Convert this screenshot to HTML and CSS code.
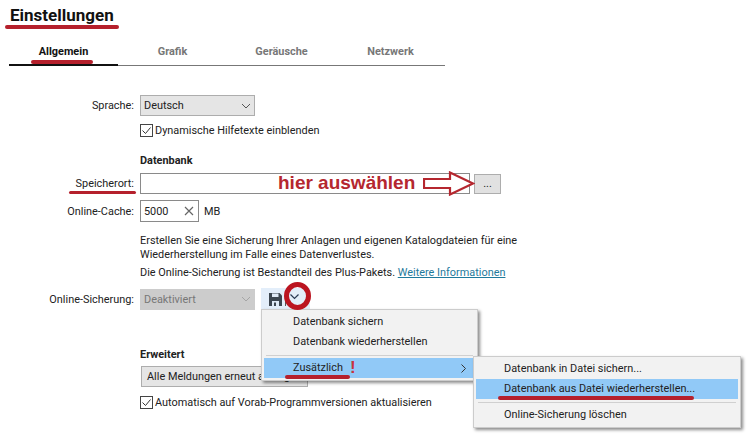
FILE: index.html
```html
<!DOCTYPE html>
<html>
<head>
  <meta charset="UTF-8">
  <title>Einstellungen</title>
  <link rel="stylesheet" href="styles.css">
</head>
<body>
  <div class="page">
    <h1 class="title">Einstellungen</h1>
    <div class="tabs">
      <div class="tab active">Allgemein</div>
      <div class="tab">Grafik</div>
      <div class="tab">Geräusche</div>
      <div class="tab">Netzwerk</div>
    </div>

    <div class="form">
      <div class="row row-lang">
        <div class="label">Sprache:</div>
        <div class="select">Deutsch
          <svg class="chev" width="10" height="6" viewBox="0 0 10 6"><path d="M1 1l4 4 4-4" fill="none" stroke="#555" stroke-width="1"/></svg>
        </div>
      </div>
      <div class="row row-check">
        <div class="label"></div>
        <label class="check">
          <svg width="13" height="13" viewBox="0 0 13 13"><rect x="0.5" y="0.5" width="12" height="12" fill="#fff" stroke="#444"/><path d="M2.5 6.5l3 3 5-6" fill="none" stroke="#333"/></svg>
          Dynamische Hilfetexte einblenden
        </label>
      </div>

      <div class="row row-head">
        <div class="label"></div>
        <div class="head">Datenbank</div>
      </div>
      <div class="row row-path">
        <div class="label">Speicherort:</div>
        <div class="input input-path"></div>
        <div class="browse">...</div>
      </div>
      <div class="row row-cache">
        <div class="label">Online-Cache:</div>
        <div class="input input-cache">5000
          <svg width="10" height="10" viewBox="0 0 10 10"><path d="M1 1l8 8M9 1l-8 8" stroke="#666" stroke-width="1.2"/></svg>
        </div>
        <div class="unit">MB</div>
      </div>

      <div class="row row-info">
        <div class="label"></div>
        <div class="info">
          <p>Erstellen Sie eine Sicherung Ihrer Anlagen und eigenen Katalogdateien für eine<br>Wiederherstellung im Falle eines Datenverlustes.</p>
          <p class="info-plus">Die Online-Sicherung ist Bestandteil des Plus-Pakets. <a href="#">Weitere Informationen</a></p>
        </div>
      </div>

      <div class="row row-backup">
        <div class="label">Online-Sicherung:</div>
        <div class="select disabled">Deaktiviert
          <svg class="chev" width="10" height="6" viewBox="0 0 10 6"><path d="M1 1l4 4 4-4" fill="none" stroke="#a5a5a5" stroke-width="1"/></svg>
        </div>
        <div class="split">
          <svg width="13" height="13" viewBox="0 0 13 13"><path d="M0 0h10.5l2.5 2.5V13H0z" fill="#3c4650"/><rect x="3" y="0.5" width="6.5" height="3.5" fill="#dfeaf6"/><rect x="3" y="8" width="7" height="5" fill="#dfeaf6"/><rect x="5" y="9.5" width="2" height="3.5" fill="#3c4650"/></svg>
          <span class="split-bar"></span>
          <svg class="split-chev" width="9" height="6" viewBox="0 0 9 6"><path d="M0.5 0.5l4 4 4-4" fill="none" stroke="#2a3a55" stroke-width="1.2"/></svg>
        </div>
      </div>

      <div class="row row-head-adv">
        <div class="label"></div>
        <div class="head">Erweitert</div>
      </div>
      <div class="row row-msg">
        <div class="label"></div>
        <div class="select select-msg">Alle Meldungen erneut anzeigen</div>
      </div>
      <div class="row row-check2">
        <div class="label"></div>
        <label class="check">
          <svg width="13" height="13" viewBox="0 0 13 13"><rect x="0.5" y="0.5" width="12" height="12" fill="#fff" stroke="#444"/><path d="M2.5 6.5l3 3 5-6" fill="none" stroke="#333"/></svg>
          Automatisch auf Vorab-Programmversionen aktualisieren
        </label>
      </div>
    </div>
  </div>

  <!-- Kontextmenüs -->
  <div class="menu menu-main">
    <div class="item">Datenbank sichern</div>
    <div class="item">Datenbank wiederherstellen</div>
    <div class="sep"></div>
    <div class="item hot">Zusätzlich
      <svg class="sub-arrow" width="5" height="9" viewBox="0 0 5 9"><path d="M0.5 0.5l4 4-4 4" fill="none" stroke="#333"/></svg>
    </div>
  </div>
  <div class="menu menu-sub">
    <div class="item">Datenbank in Datei sichern...</div>
    <div class="item hot">Datenbank aus Datei wiederherstellen...</div>
    <div class="sep"></div>
    <div class="item">Online-Sicherung löschen</div>
  </div>

  <!-- rote Markierungen -->
  <div class="mark mark-title"></div>
  <div class="mark mark-tab"></div>
  <div class="mark mark-path"></div>
  <div class="mark mark-extra"></div>
  <div class="mark mark-restore"></div>
  <div class="hint">hier auswählen</div>
  <svg class="hint-arrow" width="52" height="25" viewBox="0 0 52 25"><path d="M1 8h26V1.5L50 12.5 27 23.5V17H1z" fill="#fff" stroke="#b5272f" stroke-width="2.2"/></svg>
  <div class="bang">!</div>
  <div class="ring"></div>
</body>
</html>
```

FILE: styles.css
```css
html, body {
  margin: 0;
  height: 100%;
}
body {
  background: #fff;
  color: #222;
  font-family: Roboto, "Noto Sans", sans-serif;
  font-size: 10.9px;
  overflow: hidden;
  position: relative;
}
.page {
  padding: 3px 305px 0 9px;
}
.title {
  margin: 0;
  font-size: 17px;
  line-height: 24px;
  font-weight: 700;
  color: #111;
  padding-left: 1px;
}
.tabs {
  display: flex;
  margin-top: 15px;
  border-bottom: 1px solid #777;
  height: 23px;
}
.tab {
  width: 109px;
  text-align: center;
  font-weight: 700;
  line-height: 20px;
  color: #777;
}
.tab.active {
  color: #111;
  border-bottom: 2px solid #111;
  height: 22px;
}

.row {
  display: flex;
  align-items: center;
  gap: 6px;
}
.label {
  width: 125px;
  flex: none;
  text-align: right;
  white-space: nowrap;
}
.row-lang { margin-top: 29px; }
.row-check { margin-top: 8px; }
.row-head { margin-top: 16px; }
.row-path { margin-top: 5px; }
.row-cache { margin-top: 6px; }
.row-info { margin-top: 12px; align-items: flex-start; }
.row-backup { margin-top: 8px; }
.row-head-adv { margin-top: 37px; }
.row-msg { margin-top: 4px; }
.row-check2 { margin-top: 9px; }

.select {
  width: 115px;
  height: 21px;
  flex: none;
  box-sizing: border-box;
  border: 1px solid #adadad;
  background: #e5e5e5;
  display: flex;
  align-items: center;
  justify-content: space-between;
  padding: 0 3px 0 3px;
  color: #222;
}
.select.disabled {
  background: #ccc;
  border-color: #ccc;
  color: #777;
}
.select-msg {
  width: 167px;
  margin-left: 1px;
  white-space: nowrap;
  padding-left: 5px;
}
.check {
  display: flex;
  align-items: center;
  gap: 2px;
  white-space: nowrap;
  height: 13px;
}
.head {
  font-weight: 700;
  color: #222;
  line-height: 15px;
}
.input {
  box-sizing: border-box;
  border: 1px solid #8a8a8a;
  background: #fff;
  height: 21px;
  flex: none;
}
.input-path {
  width: 330px;
}
.browse {
  width: 27px;
  height: 20px;
  flex: none;
  margin-left: -2px;
  box-sizing: border-box;
  border: 1px solid #adadad;
  background: #e1e1e1;
  text-align: center;
  line-height: 18px;
}
.input-cache {
  width: 59px;
  height: 22px;
  display: flex;
  align-items: center;
  justify-content: space-between;
  padding: 0 4px 0 3px;
}
.unit {
  margin-left: -1px;
}
.info p {
  margin: 0;
  line-height: 14px;
  white-space: nowrap;
}
.info .info-plus {
  margin-top: 4px;
}
.info a {
  color: #1f7a9c;
}
.split {
  width: 49px;
  height: 22px;
  flex: none;
  background: #e3eefa;
  display: flex;
  align-items: center;
  gap: 3px;
  padding-left: 8px;
  box-sizing: border-box;
}
.split-bar {
  width: 1px;
  height: 14px;
  background: #555;
}
.split-chev {
  margin-left: 1px;
  margin-bottom: 4px;
}

.menu {
  position: absolute;
  background: #f2f2f2;
  border: 1px solid #ccc;
  box-shadow: 2px 2px 3px rgba(0, 0, 0, 0.45);
  box-sizing: border-box;
  padding: 2px 2px 1px;
}
.menu-main {
  left: 261px;
  top: 309px;
  width: 217px;
  height: 72px;
}
.menu-sub {
  left: 473px;
  top: 356px;
  width: 268px;
  height: 72px;
}
.menu-sub .item {
  padding-left: 28px;
}
.item {
  height: 20px;
  line-height: 20px;
  padding-left: 29px;
  position: relative;
}
.item.hot {
  background: #91c9f7;
}
.sep {
  height: 1px;
  margin: 3px 2px 2px;
  background: #d0d0d0;
}
.sub-arrow {
  position: absolute;
  right: 9px;
  top: 6px;
}

.mark {
  position: absolute;
  height: 4px;
  background: #b5202c;
  border-radius: 2px;
}
.mark-title { left: 5px; top: 25px; width: 114px; }
.mark-tab { left: 31px; top: 60px; width: 62px; }
.mark-path { left: 69px; top: 191px; width: 67px; height: 3px; }
.mark-extra { left: 285px; top: 375px; width: 65px; }
.mark-restore { left: 498px; top: 396px; width: 196px; }
.hint {
  position: absolute;
  left: 278px;
  top: 172px;
  font-family: "Liberation Sans", sans-serif;
  font-size: 19px;
  line-height: 22px;
  font-weight: 700;
  color: #b5272f;
  white-space: nowrap;
}
.hint-arrow {
  position: absolute;
  left: 423px;
  top: 171px;
}
.bang {
  position: absolute;
  left: 350px;
  top: 358px;
  font-family: "Liberation Sans", sans-serif;
  font-size: 17px;
  line-height: 20px;
  font-weight: 700;
  color: #c8323c;
}
.ring {
  position: absolute;
  left: 284px;
  top: 282px;
  width: 27px;
  height: 28px;
  border: 5px solid #bb1420;
  border-radius: 50%;
  box-sizing: border-box;
}
```
